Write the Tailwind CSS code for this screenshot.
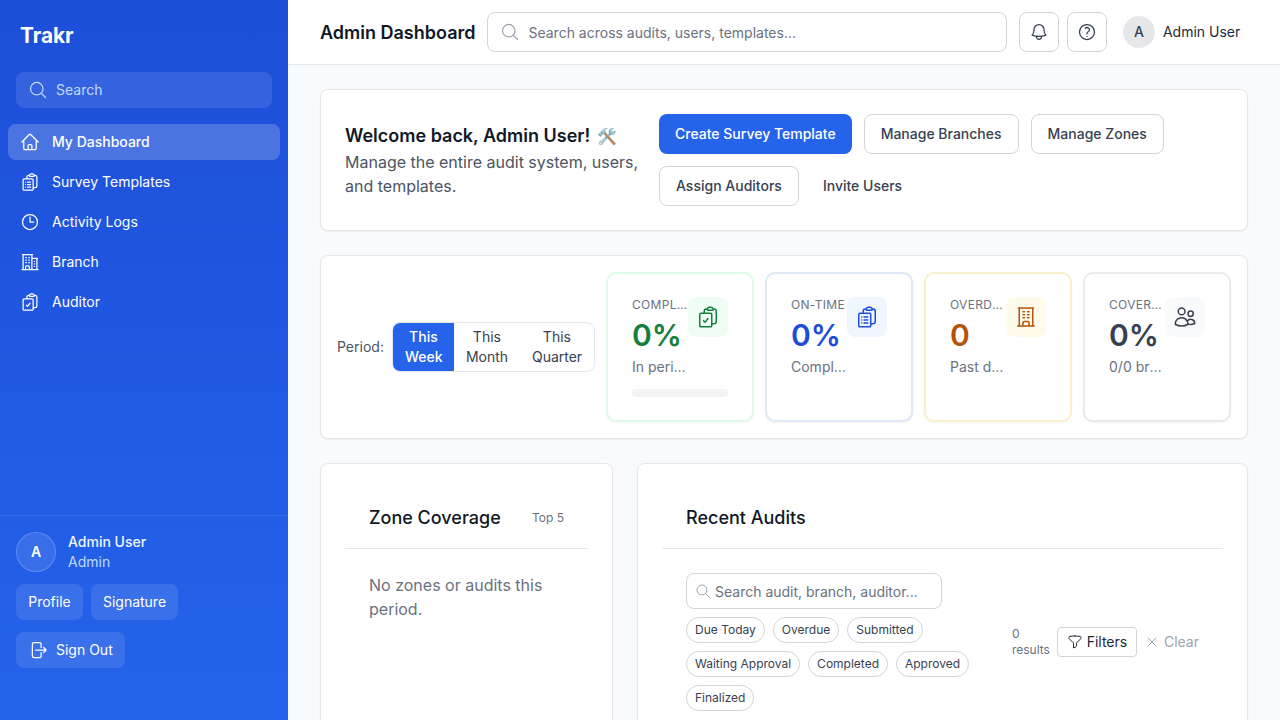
<!DOCTYPE html>
<html lang="en">
<head>
    <meta charset="UTF-8">
    <meta name="viewport" content="width=device-width, initial-scale=1.0">
    <title>Trakr - Admin Dashboard</title>
    <script src="https://cdn.jsdelivr.net/npm/@tailwindcss/browser@4"></script>
</head>
<body class="h-screen overflow-hidden font-['Inter',sans-serif] text-[#111827] bg-[#f9fafb]">
<div class="flex h-screen">
    <!-- Sidebar -->
    <aside class="w-[288px] shrink-0 flex flex-col bg-gradient-to-b from-[#1d4ed8] to-[#2563eb] text-white">
        <div class="px-5 pt-[22px] text-[20.8px] leading-7 font-bold h-[72px]">Trakr</div>
        <div class="px-4">
            <div class="h-9 flex items-center gap-2 rounded-lg bg-white/10 px-3 text-sm text-[#bfdbfe]">
                <svg class="w-5 h-5" fill="none" viewBox="0 0 24 24" stroke="currentColor" stroke-width="1.5"><path stroke-linecap="round" stroke-linejoin="round" d="m21 21-5.197-5.197m0 0A7.5 7.5 0 1 0 5.196 5.196a7.5 7.5 0 0 0 10.607 10.607Z"/></svg>
                <span>Search</span>
            </div>
        </div>
        <nav class="mt-4 px-2 flex flex-col gap-1 text-sm">
            <a class="h-9 flex items-center gap-3 rounded-lg bg-white/20 px-3 font-medium">
                <svg class="w-5 h-5" fill="none" viewBox="0 0 24 24" stroke="currentColor" stroke-width="1.5"><path stroke-linecap="round" stroke-linejoin="round" d="m2.25 12 8.954-8.955c.44-.439 1.152-.439 1.591 0L21.75 12M4.5 9.75v10.125c0 .621.504 1.125 1.125 1.125H9.75v-4.875c0-.621.504-1.125 1.125-1.125h2.25c.621 0 1.125.504 1.125 1.125V21h4.125c.621 0 1.125-.504 1.125-1.125V9.75M8.25 21h8.25"/></svg>
                My Dashboard
            </a>
            <a class="h-9 flex items-center gap-3 rounded-lg px-3">
                <svg class="w-5 h-5" fill="none" viewBox="0 0 24 24" stroke="currentColor" stroke-width="1.5"><path stroke-linecap="round" stroke-linejoin="round" d="M9 12h3.75M9 15h3.75M9 18h3.75m3 .75H18a2.25 2.25 0 0 0 2.25-2.25V6.108c0-1.135-.845-2.098-1.976-2.192a48.424 48.424 0 0 0-1.123-.08m-5.801 0c-.065.21-.1.433-.1.664 0 .414.336.75.75.75h4.5a.75.75 0 0 0 .75-.75 2.25 2.25 0 0 0-.1-.664m-5.8 0A2.251 2.251 0 0 1 13.5 2.25H15c1.012 0 1.867.668 2.15 1.586m-5.8 0c-.376.023-.75.05-1.124.08C9.095 4.01 8.25 4.973 8.25 6.108V8.25m0 0H4.875c-.621 0-1.125.504-1.125 1.125v11.25c0 .621.504 1.125 1.125 1.125h9.75c.621 0 1.125-.504 1.125-1.125V9.375c0-.621-.504-1.125-1.125-1.125H8.25ZM6.75 12h.008v.008H6.75V12Zm0 3h.008v.008H6.75V15Zm0 3h.008v.008H6.75V18Z"/></svg>
                Survey Templates
            </a>
            <a class="h-9 flex items-center gap-3 rounded-lg px-3">
                <svg class="w-5 h-5" fill="none" viewBox="0 0 24 24" stroke="currentColor" stroke-width="1.5"><path stroke-linecap="round" stroke-linejoin="round" d="M12 6v6h4.5m4.5 0a9 9 0 1 1-18 0 9 9 0 0 1 18 0Z"/></svg>
                Activity Logs
            </a>
            <a class="h-9 flex items-center gap-3 rounded-lg px-3">
                <svg class="w-5 h-5" fill="none" viewBox="0 0 24 24" stroke="currentColor" stroke-width="1.5"><path stroke-linecap="round" stroke-linejoin="round" d="M2.25 21h19.5m-18-18v18m10.5-18v18m6-13.5V21M6.75 6.75h.75m-.75 3h.75m-.75 3h.75m3-6h.75m-.75 3h.75m-.75 3h.75M6.75 21v-3.375c0-.621.504-1.125 1.125-1.125h2.25c.621 0 1.125.504 1.125 1.125V21M3 3h12m-.75 4.5H21m-3.75 3.75h.008v.008h-.008v-.008Zm0 3h.008v.008h-.008v-.008Zm0 3h.008v.008h-.008v-.008Z"/></svg>
                Branch
            </a>
            <a class="h-9 flex items-center gap-3 rounded-lg px-3">
                <svg class="w-5 h-5" fill="none" viewBox="0 0 24 24" stroke="currentColor" stroke-width="1.5"><path stroke-linecap="round" stroke-linejoin="round" d="M11.35 3.836c-.065.21-.1.433-.1.664 0 .414.336.75.75.75h4.5a.75.75 0 0 0 .75-.75 2.25 2.25 0 0 0-.1-.664m-5.8 0A2.251 2.251 0 0 1 13.5 2.25H15c1.012 0 1.867.668 2.15 1.586m-5.8 0c-.376.023-.75.05-1.124.08C9.095 4.01 8.25 4.973 8.25 6.108V8.25m8.9-4.414c.376.023.75.05 1.124.08 1.131.094 1.976 1.057 1.976 2.192V16.5A2.25 2.25 0 0 1 18 18.75h-2.25m-7.5-10.5H4.875c-.621 0-1.125.504-1.125 1.125v11.25c0 .621.504 1.125 1.125 1.125h9.75c.621 0 1.125-.504 1.125-1.125V18.75m-7.5-10.5h6.375c.621 0 1.125.504 1.125 1.125v9.375m-8.25-3 1.5 1.5 3-3.75"/></svg>
                Auditor
            </a>
        </nav>
        <div class="mt-auto border-t border-white/10 p-4 h-[205px]">
            <div class="flex items-center gap-3">
                <div class="w-10 h-10 rounded-full bg-white/10 border border-white/20 flex items-center justify-center text-sm font-semibold">A</div>
                <div class="text-sm">
                    <div class="font-medium text-[#eff6ff]">Admin User</div>
                    <div class="text-[#bfdbfe]">Admin</div>
                </div>
            </div>
            <div class="mt-3 flex gap-2 text-sm">
                <button class="h-9 w-[67px] rounded-lg bg-white/10">Profile</button>
                <button class="h-9 w-[87px] rounded-lg bg-white/10">Signature</button>
            </div>
            <button class="mt-3 h-9 w-[109px] px-3 rounded-lg bg-white/10 flex items-center gap-2 text-sm">
                <svg class="w-5 h-5" fill="none" viewBox="0 0 24 24" stroke="currentColor" stroke-width="1.5"><path stroke-linecap="round" stroke-linejoin="round" d="M15.75 9V5.25A2.25 2.25 0 0 0 13.5 3h-6a2.25 2.25 0 0 0-2.25 2.25v13.5A2.25 2.25 0 0 0 7.5 21h6a2.25 2.25 0 0 0 2.25-2.25V15m3 0 3-3m0 0-3-3m3 3H9"/></svg>
                Sign Out
            </button>
        </div>
    </aside>

    <div class="flex-1 min-w-0 flex flex-col">
        <!-- Top bar -->
        <header class="h-[65px] shrink-0 bg-white border-b border-[#e5e7eb] flex items-center pl-8 pr-10">
            <h1 class="mt-0.5 text-lg font-semibold text-[#111827] whitespace-nowrap">Admin Dashboard</h1>
            <div class="ml-3 w-[519.5px] shrink-0 h-10 flex items-center gap-2 rounded-lg border border-[#d1d5db] px-3 bg-white">
                <svg class="w-5 h-5 text-[#9ca3af] shrink-0" fill="none" viewBox="0 0 24 24" stroke="currentColor" stroke-width="1.5"><path stroke-linecap="round" stroke-linejoin="round" d="m21 21-5.197-5.197m0 0A7.5 7.5 0 1 0 5.196 5.196a7.5 7.5 0 0 0 10.607 10.607Z"/></svg>
                <input class="flex-1 min-w-0 pt-0.5 text-sm outline-none placeholder:text-[#6b7280]" placeholder="Search across audits, users, templates...">
            </div>
            <button class="ml-3 w-10 h-10 shrink-0 flex items-center justify-center rounded-lg border border-[#d1d5db] text-[#374151]">
                <svg class="w-5 h-5" fill="none" viewBox="0 0 24 24" stroke="currentColor" stroke-width="1.5"><path stroke-linecap="round" stroke-linejoin="round" d="M14.857 17.082a23.848 23.848 0 0 0 5.454-1.31A8.967 8.967 0 0 1 18 9.75V9A6 6 0 0 0 6 9v.75a8.967 8.967 0 0 1-2.312 6.022c1.733.64 3.56 1.085 5.455 1.31m5.714 0a24.255 24.255 0 0 1-5.714 0m5.714 0a3 3 0 1 1-5.714 0"/></svg>
            </button>
            <button class="ml-2 w-10 h-10 shrink-0 flex items-center justify-center rounded-lg border border-[#d1d5db] text-[#374151]">
                <svg class="w-5 h-5" fill="none" viewBox="0 0 24 24" stroke="currentColor" stroke-width="1.5"><path stroke-linecap="round" stroke-linejoin="round" d="M9.879 7.519c1.171-1.025 3.071-1.025 4.242 0 1.172 1.025 1.172 2.687 0 3.712-.203.179-.43.326-.67.442-.745.361-1.45.999-1.45 1.827v.75M21 12a9 9 0 1 1-18 0 9 9 0 0 1 18 0Zm-9 5.25h.008v.008H12v-.008Z"/></svg>
            </button>
            <div class="ml-4 flex items-center gap-2">
                <div class="w-8 h-8 rounded-full bg-[#e5e7eb] text-[#374151] flex items-center justify-center text-sm font-medium">A</div>
                <span class="text-sm text-[#1f2937] whitespace-nowrap">Admin User</span>
            </div>
        </header>

        <!-- Main -->
        <main class="flex-1 min-h-0 overflow-hidden px-8 pt-6 flex flex-col gap-6">
            <section class="w-[928px] shrink-0 bg-white border border-[#e5e7eb] rounded-lg shadow-xs p-6 flex items-center gap-3">
                <div class="w-[302px] shrink-0">
                    <h2 class="text-lg leading-7 font-semibold text-[#111827]">Welcome back, Admin User! <span class="ml-0.5 text-base opacity-75">🛠️</span></h2>
                    <p class="text-base text-[#4b5563]">Manage the entire audit system, users, and templates.</p>
                </div>
                <div class="flex-1 flex flex-wrap gap-3 text-sm font-medium text-[#374151]">
                    <button class="h-10 px-4 rounded-lg bg-[#2563eb] text-white">Create Survey Template</button>
                    <button class="h-10 px-4 rounded-lg bg-white border border-[#d1d5db]">Manage Branches</button>
                    <button class="h-10 px-4 rounded-lg bg-white border border-[#d1d5db]">Manage Zones</button>
                    <button class="h-10 px-4 rounded-lg bg-white border border-[#d1d5db]">Assign Auditors</button>
                    <button class="h-10 px-3 rounded-lg">Invite Users</button>
                </div>
            </section>

            <section class="w-[928px] shrink-0 bg-white border border-[#e5e7eb] rounded-lg shadow-xs p-4 flex items-center">
                <span class="text-sm text-[#4b5563]">Period:</span>
                <div class="ml-2 flex rounded-lg border border-[#e5e7eb] overflow-hidden text-sm text-[#374151] text-center">
                    <button class="px-3 py-1 w-[61px] bg-[#2563eb] text-white font-medium">This Week</button>
                    <button class="px-3 py-1 w-[66px]">This Month</button>
                    <button class="px-3 py-1 w-[74px]">This Quarter</button>
                </div>
                <div class="ml-[11.5px] flex gap-[11px]">
                    <div class="w-[148px] h-[150px] bg-white rounded-[10px] border-2 border-[#dcfce7] shadow-xs px-6 pt-[23px]">
                        <div class="flex justify-between">
                            <div class="min-w-0">
                                <div class="text-xs uppercase tracking-wide text-[#6b7280] truncate">Completion</div>
                                <div class="mt-1 text-3xl leading-9 font-semibold text-[#15803d]">0%</div>
                                <div class="mt-1 text-sm text-[#6b7280] truncate">In period</div>
                            </div>
                            <div class="w-10 h-10 shrink-0 rounded-lg bg-[#f0fdf4] text-[#15803d] flex items-center justify-center">
                                <svg class="w-6 h-6" fill="none" viewBox="0 0 24 24" stroke="currentColor" stroke-width="1.5"><path stroke-linecap="round" stroke-linejoin="round" d="M11.35 3.836c-.065.21-.1.433-.1.664 0 .414.336.75.75.75h4.5a.75.75 0 0 0 .75-.75 2.25 2.25 0 0 0-.1-.664m-5.8 0A2.251 2.251 0 0 1 13.5 2.25H15c1.012 0 1.867.668 2.15 1.586m-5.8 0c-.376.023-.75.05-1.124.08C9.095 4.01 8.25 4.973 8.25 6.108V8.25m8.9-4.414c.376.023.75.05 1.124.08 1.131.094 1.976 1.057 1.976 2.192V16.5A2.25 2.25 0 0 1 18 18.75h-2.25m-7.5-10.5H4.875c-.621 0-1.125.504-1.125 1.125v11.25c0 .621.504 1.125 1.125 1.125h9.75c.621 0 1.125-.504 1.125-1.125V18.75m-7.5-10.5h6.375c.621 0 1.125.504 1.125 1.125v9.375m-8.25-3 1.5 1.5 3-3.75"/></svg>
                            </div>
                        </div>
                        <div class="mt-3 h-2 rounded-full bg-[#f3f4f6]"></div>
                    </div>
                    <div class="w-[148px] h-[150px] bg-white rounded-[10px] border-2 border-[#dfe8f6] shadow-xs px-6 pt-[23px]">
                        <div class="flex justify-between">
                            <div class="min-w-0">
                                <div class="text-xs uppercase tracking-wide text-[#6b7280] truncate">On-time</div>
                                <div class="mt-1 text-3xl leading-9 font-semibold text-[#1d4ed8]">0%</div>
                                <div class="mt-1 text-sm text-[#6b7280] truncate">Completed</div>
                            </div>
                            <div class="w-10 h-10 shrink-0 rounded-lg bg-[#eff6ff] text-[#1d4ed8] flex items-center justify-center">
                                <svg class="w-6 h-6" fill="none" viewBox="0 0 24 24" stroke="currentColor" stroke-width="1.5"><path stroke-linecap="round" stroke-linejoin="round" d="M9 12h3.75M9 15h3.75M9 18h3.75m3 .75H18a2.25 2.25 0 0 0 2.25-2.25V6.108c0-1.135-.845-2.098-1.976-2.192a48.424 48.424 0 0 0-1.123-.08m-5.801 0c-.065.21-.1.433-.1.664 0 .414.336.75.75.75h4.5a.75.75 0 0 0 .75-.75 2.25 2.25 0 0 0-.1-.664m-5.8 0A2.251 2.251 0 0 1 13.5 2.25H15c1.012 0 1.867.668 2.15 1.586m-5.8 0c-.376.023-.75.05-1.124.08C9.095 4.01 8.25 4.973 8.25 6.108V8.25m0 0H4.875c-.621 0-1.125.504-1.125 1.125v11.25c0 .621.504 1.125 1.125 1.125h9.75c.621 0 1.125-.504 1.125-1.125V9.375c0-.621-.504-1.125-1.125-1.125H8.25ZM6.75 12h.008v.008H6.75V12Zm0 3h.008v.008H6.75V15Zm0 3h.008v.008H6.75V18Z"/></svg>
                            </div>
                        </div>
                    </div>
                    <div class="w-[148px] h-[150px] bg-white rounded-[10px] border-2 border-[#fbf0cc] shadow-xs px-6 pt-[23px]">
                        <div class="flex justify-between">
                            <div class="min-w-0">
                                <div class="text-xs uppercase tracking-wide text-[#6b7280] truncate">Overdue</div>
                                <div class="mt-1 text-3xl leading-9 font-semibold text-[#b45309]">0</div>
                                <div class="mt-1 text-sm text-[#6b7280] truncate">Past due</div>
                            </div>
                            <div class="w-10 h-10 shrink-0 rounded-lg bg-[#fffbeb] text-[#b45309] flex items-center justify-center">
                                <svg class="w-6 h-6" fill="none" viewBox="0 0 24 24" stroke="currentColor" stroke-width="1.5"><path stroke-linecap="round" stroke-linejoin="round" d="M3.75 21h16.5M4.5 3h15M5.25 3v18m13.5-18v18M9 6.75h1.5m-1.5 3h1.5m-1.5 3h1.5m3-6H15m-1.5 3H15m-1.5 3H15M9 21v-3.375c0-.621.504-1.125 1.125-1.125h3.75c.621 0 1.125.504 1.125 1.125V21"/></svg>
                            </div>
                        </div>
                    </div>
                    <div class="w-[148px] h-[150px] bg-white rounded-[10px] border-2 border-[#e9ebef] shadow-xs px-6 pt-[23px]">
                        <div class="flex justify-between">
                            <div class="min-w-0">
                                <div class="text-xs uppercase tracking-wide text-[#6b7280] truncate">Coverage</div>
                                <div class="mt-1 text-3xl leading-9 font-semibold text-[#374151]">0%</div>
                                <div class="mt-1 text-sm text-[#6b7280] truncate">0/0 branches</div>
                            </div>
                            <div class="w-10 h-10 shrink-0 rounded-lg bg-[#f9fafb] text-[#374151] flex items-center justify-center">
                                <svg class="w-6 h-6" fill="none" viewBox="0 0 24 24" stroke="currentColor" stroke-width="1.5"><path stroke-linecap="round" stroke-linejoin="round" d="M15 19.128a9.38 9.38 0 0 0 2.625.372 9.337 9.337 0 0 0 4.121-.952 4.125 4.125 0 0 0-7.533-2.493M15 19.128v-.003c0-1.113-.285-2.16-.786-3.07M15 19.128v.106A12.318 12.318 0 0 1 8.624 21c-2.331 0-4.512-.645-6.374-1.766l-.001-.109a6.375 6.375 0 0 1 11.964-3.07M12 6.375a3.375 3.375 0 1 1-6.75 0 3.375 3.375 0 0 1 6.75 0Zm8.25 2.25a2.625 2.625 0 1 1-5.25 0 2.625 2.625 0 0 1 5.25 0Z"/></svg>
                            </div>
                        </div>
                    </div>
                </div>
            </section>

            <div class="w-[928px] flex gap-6 items-start">
                <section class="w-[293px] shrink-0 h-[400px] bg-white border border-[#e5e7eb] rounded-lg shadow-xs p-6">
                    <div class="flex items-center justify-between px-6 py-4 border-b border-[#e5e7eb]">
                        <h3 class="text-lg leading-7 font-medium text-[#111827]">Zone Coverage</h3>
                        <span class="text-xs text-[#6b7280]">Top 5</span>
                    </div>
                    <p class="pt-6 px-6 text-base text-[#6b7280]">No zones or audits this period.</p>
                </section>
                <section class="flex-1 min-w-0 h-[400px] bg-white border border-[#e5e7eb] rounded-lg shadow-xs p-6">
                    <div class="px-6 py-4 border-b border-[#e5e7eb]">
                        <h3 class="text-lg leading-7 font-medium text-[#111827]">Recent Audits</h3>
                    </div>
                    <div class="pt-6 pl-6 pr-6 flex items-center justify-between">
                        <div class="w-[310px] shrink-0">
                            <div class="w-64 h-9 flex items-center gap-1 rounded-lg border border-[#d1d5db] px-2">
                                <svg class="w-4 h-4 text-[#9ca3af] shrink-0" fill="none" viewBox="0 0 24 24" stroke="currentColor" stroke-width="1.5"><path stroke-linecap="round" stroke-linejoin="round" d="m21 21-5.197-5.197m0 0A7.5 7.5 0 1 0 5.196 5.196a7.5 7.5 0 0 0 10.607 10.607Z"/></svg>
                                <input class="flex-1 min-w-0 pt-0.5 text-sm outline-none placeholder:text-[#6b7280]" placeholder="Search audit, branch, auditor...">
                            </div>
                            <div class="mt-2 flex flex-wrap gap-2 text-xs text-[#374151]">
                                <span class="px-2 py-1 rounded-full border border-[#d1d5db]">Due Today</span>
                                <span class="px-2 py-1 rounded-full border border-[#d1d5db]">Overdue</span>
                                <span class="px-2 py-1 rounded-full border border-[#d1d5db]">Submitted</span>
                                <span class="px-2 py-1 rounded-full border border-[#d1d5db]">Waiting Approval</span>
                                <span class="px-2 py-1 rounded-full border border-[#d1d5db]">Completed</span>
                                <span class="px-2 py-1 rounded-full border border-[#d1d5db]">Approved</span>
                                <span class="px-2 py-1 rounded-full border border-[#d1d5db]">Finalized</span>
                            </div>
                        </div>
                        <div class="flex items-center">
                            <span class="w-[37px] text-xs text-[#6b7280]">0 results</span>
                            <button class="ml-2 h-[30px] w-[80px] flex items-center justify-center gap-1 rounded border border-[#d1d5db] text-sm text-[#1f2937]">
                                <svg class="w-4 h-4" fill="none" viewBox="0 0 24 24" stroke="currentColor" stroke-width="1.5"><path stroke-linecap="round" stroke-linejoin="round" d="M12 3c2.755 0 5.455.232 8.083.678.533.09.917.556.917 1.096v1.044a2.25 2.25 0 0 1-.659 1.591l-5.432 5.432a2.25 2.25 0 0 0-.659 1.591v2.927a2.25 2.25 0 0 1-1.244 2.013L9.75 21v-6.568a2.25 2.25 0 0 0-.659-1.591L3.659 7.409A2.25 2.25 0 0 1 3 5.818V4.774c0-.54.384-1.006.917-1.096A48.32 48.32 0 0 1 12 3Z"/></svg>
                                Filters
                            </button>
                            <button class="ml-[7px] flex items-center gap-1 text-sm text-[#9ca3af]">
                                <svg class="w-4 h-4" fill="none" viewBox="0 0 24 24" stroke="currentColor" stroke-width="1.5"><path stroke-linecap="round" stroke-linejoin="round" d="M6 18 18 6M6 6l12 12"/></svg>
                                Clear
                            </button>
                        </div>
                    </div>
                </section>
            </div>
        </main>
    </div>
</div>
</body>
</html>
